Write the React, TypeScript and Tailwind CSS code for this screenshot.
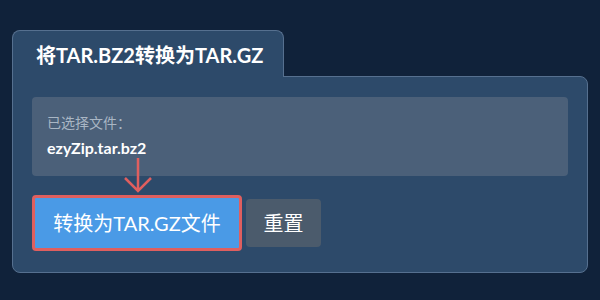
import React from 'react';

const FONT = { fontFamily: 'Lato, "Noto Sans CJK SC", sans-serif' };

const App = () => {
  return (
    <div className="w-[600px] h-[300px] bg-[#10223a] pt-[30px] px-3" style={FONT}>
      {/* tab */}
      <div className="relative z-10 w-[272px] h-[47px] -mb-px bg-[#2d4a6a] border border-b-0 border-[#56708f] rounded-t-lg flex items-center pl-[23px]">
        <h1 className="text-[20px] font-bold text-white leading-none pt-[2px]">将TAR.BZ2转换为TAR.GZ</h1>
      </div>
      {/* panel */}
      <div className="relative w-[576px] h-[197px] bg-[#2d4a6a] border border-[#56708f] rounded-lg rounded-tl-none px-[19px] pt-[20px]">
        <div className="h-[79px] bg-[#4b6079] rounded px-[15px] pt-[19px]">
          <div className="text-[14px] text-[#a9b6c4] leading-none">已选择文件：</div>
          <div className="mt-[10px] text-[16px] font-bold text-white leading-none">ezyZip.tar.bz2</div>
        </div>
        <div className="flex items-center gap-1 mt-[19px]">
          <button className="w-[210px] h-[56px] bg-[#4a9ae6] border-[3px] border-[#df5f5f] rounded text-white text-[20px]">
            转换为TAR.GZ文件
          </button>
          <button className="w-[75px] h-[48px] bg-[#4b5b6c] rounded text-white text-[20px]">重置</button>
        </div>
        <svg className="absolute left-[111px] top-[81px]" width="28" height="36" viewBox="0 0 28 36" fill="none">
          <path d="M14 0 V33 M1 20 L14 33 L27 20" stroke="#df5f5f" strokeWidth="2.5" />
        </svg>
      </div>
    </div>
  );
};

export default App;
